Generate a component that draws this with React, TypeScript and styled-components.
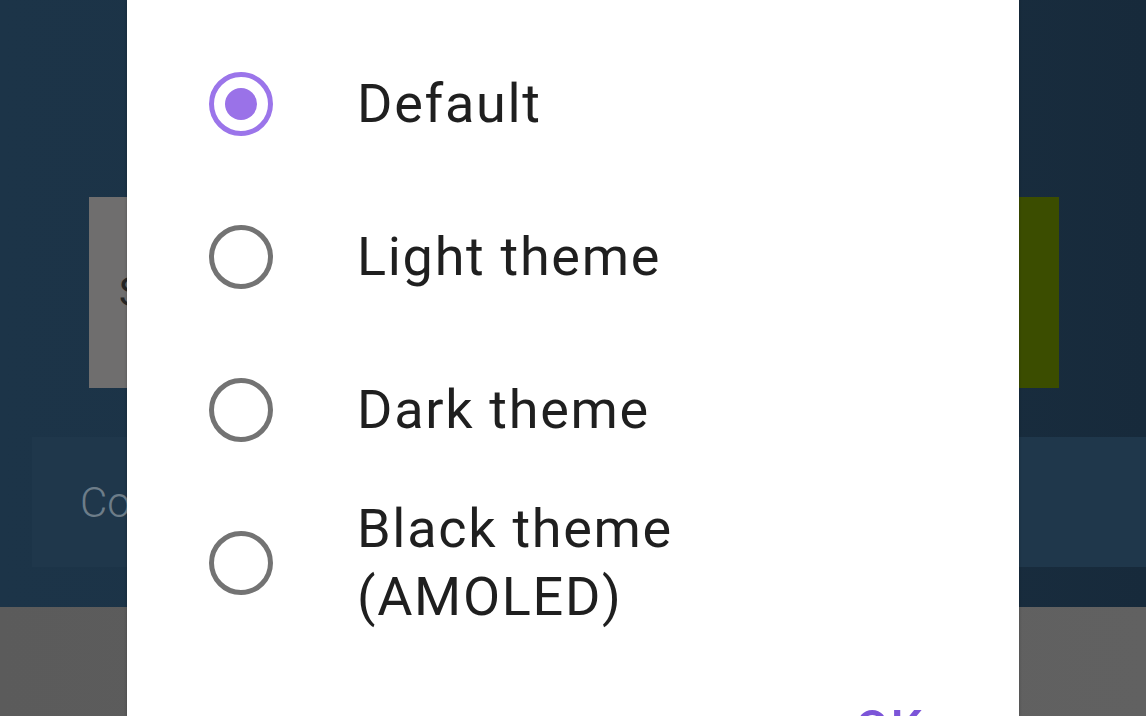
import styled, { createGlobalStyle } from "styled-components";

const GlobalStyle = createGlobalStyle`
  html, body {
    margin: 0;
    padding: 0;
    overflow: hidden;
  }
  body {
    font-family: Roboto, "Liberation Sans", sans-serif;
  }
`;

const Screen = styled.div`
  position: relative;
  width: 1146px;
  height: 716px;
  overflow: hidden;
  display: flex;
  flex-direction: column;
`;

const Backdrop = styled.div`
  height: 607px;
  background: linear-gradient(90deg, #1c3448 0%, #1b3245 50%, #172a3b 100%);
  display: flex;
  flex-direction: column;
  padding-top: 197px;
  box-sizing: border-box;
`;

const TopCards = styled.div`
  display: flex;
  justify-content: space-between;
  padding: 0 87px 0 89px;
  height: 191px;
`;

const TopCard = styled.div<{ $tone: string }>`
  width: 470px;
  background: ${(p) => p.$tone};
  color: #262626;
  font-size: 40px;
  display: flex;
  align-items: center;
  padding-left: 30px;
  box-sizing: border-box;
`;

const BottomCards = styled.div`
  display: flex;
  justify-content: space-between;
  padding: 0 0 0 32px;
  margin-top: 49px;
  height: 130px;
`;

const ChipCard = styled.div<{ $pad: number }>`
  width: 300px;
  background: #1f374b;
  color: #6d7d89;
  font-size: 42px;
  font-weight: 300;
  display: flex;
  align-items: center;
  padding-left: ${(p) => p.$pad}px;
  box-sizing: border-box;
`;

const NavBand = styled.div`
  flex: 1;
  background: linear-gradient(90deg, #5b5b5b 0%, #616161 100%);
`;

const Dialog = styled.div`
  position: absolute;
  top: 0;
  bottom: 0;
  left: 127px;
  width: 892px;
  background: #ffffff;
  box-shadow: 0 0 3px rgba(0, 0, 0, 0.25);
  display: flex;
  flex-direction: column;
  padding-top: 27px;
  box-sizing: border-box;
`;

const Option = styled.div`
  height: 153px;
  display: flex;
  align-items: center;
  padding-left: 82px;
  gap: 84px;
  flex-shrink: 0;
`;

const Radio = styled.span<{ $checked?: boolean }>`
  width: 64px;
  height: 64px;
  flex-shrink: 0;
  border-radius: 50%;
  border: 5px solid ${(p) => (p.$checked ? "#9b75ea" : "#737373")};
  box-sizing: border-box;
  display: flex;
  align-items: center;
  justify-content: center;

  &::after {
    content: "";
    width: 32px;
    height: 32px;
    border-radius: 50%;
    background: #9a72e8;
    display: ${(p) => (p.$checked ? "block" : "none")};
  }
`;

const Label = styled.span`
  font-family: Roboto, "Liberation Sans", sans-serif;
  font-size: 54px;
  letter-spacing: 1.7px;
  line-height: 68px;
  color: #1f1f1f;
`;

const Actions = styled.div`
  display: flex;
  justify-content: flex-end;
  padding: 61px 96px 0 0;
`;

const OkButton = styled.span`
  font-family: Roboto, "Liberation Sans", sans-serif;
  font-size: 50px;
  font-weight: 500;
  color: #7c55d8;
  letter-spacing: 1px;
`;

const options = [
  { label: "Default", checked: true },
  { label: "Light theme" },
  { label: "Dark theme" },
  { label: "Black theme\n(AMOLED)" },
];

export default function App() {
  return (
    <>
      <GlobalStyle />
      <Screen>
        <Backdrop>
          <TopCards>
            <TopCard $tone="#6f6e6e">S</TopCard>
            <TopCard $tone="#3b4d00" />
          </TopCards>
          <BottomCards>
            <ChipCard $pad={48}>Colors</ChipCard>
            <ChipCard $pad={48}>More</ChipCard>
          </BottomCards>
        </Backdrop>
        <NavBand />
        <Dialog>
          {options.map((o) => (
            <Option key={o.label}>
              <Radio $checked={o.checked} />
              <Label>
                {o.label.split("\n").map((line, i) => (
                  <div key={i}>{line}</div>
                ))}
              </Label>
            </Option>
          ))}
          <Actions>
            <OkButton>OK</OkButton>
          </Actions>
        </Dialog>
      </Screen>
    </>
  );
}
